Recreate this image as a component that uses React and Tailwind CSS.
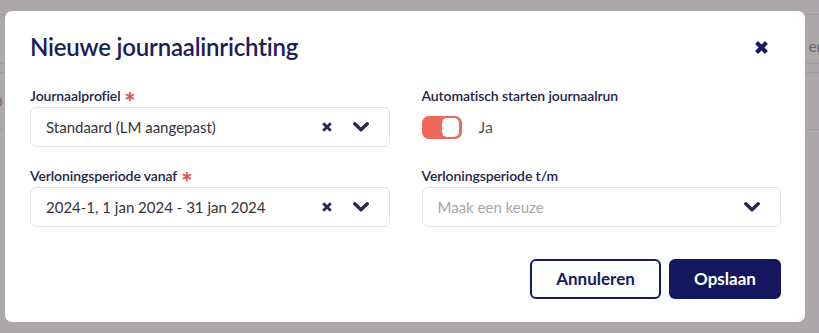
import React from "react";

function XIcon({ size = 9, stroke = 2.6, className = "" }) {
  return (
    <svg width={size} height={size} viewBox="0 0 10 10" className={className} fill="none">
      <path d="M1.2 1.2 L8.8 8.8 M8.8 1.2 L1.2 8.8" stroke="currentColor" strokeWidth={stroke} strokeLinecap="butt" />
    </svg>
  );
}

function Chevron() {
  return (
    <svg width="16" height="10" viewBox="0 0 16 10" fill="none">
      <path d="M1.8 1.8 L8 7.8 L14.2 1.8" stroke="currentColor" strokeWidth="3.4" strokeLinecap="round" strokeLinejoin="round" />
    </svg>
  );
}

function Label({ children, required }) {
  return (
    <div className="h-[20px] leading-[20px] text-[14px] font-semibold text-[#22244a] mb-[1px] tracking-[-0.1px]">
      {children}
      {required && <span className="text-[#e0574f] ml-[4px]">∗</span>}
    </div>
  );
}

function Select({ value, placeholder, clearable }) {
  return (
    <div className="h-[40px] rounded-[6px] border border-[#e3e3e6] flex items-center pl-[15px] pr-[20px]">
      <div className={"flex-1 text-[15px] " + (value ? "text-[#343434]" : "text-[#a6a6a8]")}>
        {value || placeholder}
      </div>
      {clearable && (
        <span className="text-[#262958] mr-[21px] flex">
          <XIcon size={10} stroke={2.8} />
        </span>
      )}
      <span className="text-[#262958] flex">
        <Chevron />
      </span>
    </div>
  );
}

export default function App() {
  return (
    <div
      className="relative w-[819px] h-[333px] overflow-hidden bg-[#aca7aa]"
      style={{ fontFamily: "Lato, 'Noto Sans', sans-serif" }}
    >
      {/* background page behind overlay */}
      <div className="flex flex-col">
        <div className="h-[14px]" />
        <div className="h-[49px] border-t border-[#9f9a9d] flex justify-end items-center">
          <span className="text-[15px] text-[#6e6a6c] mr-[-6px] mt-[14px]">en</span>
        </div>
        <div className="h-[9px] border-t border-[#9f9a9d]" />
        <div className="h-[57px] border-t border-[#9f9a9d] flex items-center">
          <span className="text-[14px] text-[#6e6a6c] ml-[-6px]">0</span>
        </div>
        <div className="border-t border-[#9f9a9d]" />
      </div>

      {/* dialog */}
      <div className="absolute left-[5px] top-[11px] w-[800px] h-[311px] rounded-[7px] bg-white pl-[25px] pr-[24px] pt-[22px]">
        <div className="flex items-center justify-between h-[28px]">
          <h1 className="text-[24px] leading-[28px] font-semibold text-[#1b2058] tracking-[-0.2px]">
            Nieuwe journaalinrichting
          </h1>
          <span className="text-[#161a5e] mr-[13px] flex">
            <XIcon size={13} stroke={3.2} />
          </span>
        </div>

        <div className="grid grid-cols-2 gap-x-[32px] gap-y-[19px] mt-[25px]">
          <div>
            <Label required>Journaalprofiel</Label>
            <Select value="Standaard (LM aangepast)" clearable />
          </div>
          <div>
            <Label>Automatisch starten journaalrun</Label>
            <div className="h-[40px] flex items-center">
              <div className="w-[40px] h-[23px] rounded-[7px] bg-[#f0675d] flex items-center justify-end pr-[3px]">
                <div className="w-[17px] h-[19px] rounded-[5px] bg-white" />
              </div>
              <span className="ml-[17px] text-[16px] text-[#555557]">Ja</span>
            </div>
          </div>
          <div>
            <Label required>Verloningsperiode vanaf</Label>
            <Select value="2024-1, 1 jan 2024 - 31 jan 2024" clearable />
          </div>
          <div>
            <Label>Verloningsperiode t/m</Label>
            <Select placeholder="Maak een keuze" />
          </div>
        </div>

        <div className="flex justify-end gap-[8px] mt-[32px]">
          <button className="w-[131px] h-[40px] rounded-[6px] border-2 border-[#161a5e] bg-white text-[#161a5e] text-[17px] font-bold">
            Annuleren
          </button>
          <button className="w-[112px] h-[40px] rounded-[6px] bg-[#15175e] text-white text-[17px] font-bold">
            Opslaan
          </button>
        </div>
      </div>
    </div>
  );
}
